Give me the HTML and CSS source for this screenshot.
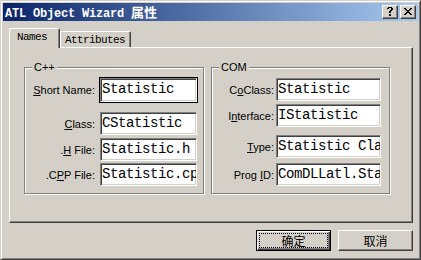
FILE: index.html
```html
<!DOCTYPE html>
<html>
<head>
<meta charset="utf-8">
<link rel="stylesheet" href="styles.css">
</head>
<body>
<div class="window">
  <div class="titlebar">
    <span class="title">ATL Object Wizard <span class="cjk">属性</span></span>
    <div class="caption-btns">
      <div class="cbtn">
        <svg width="14" height="12" viewBox="0 0 14 12" shape-rendering="crispEdges"><path fill="#000" d="M5 1h4v1H5zM4 2h2v1H4zM8 2h2v1H8zM8 3h2v1H8zM7 4h2v1H7zM6 5h2v1H6zM6 6h2v1H6zM6 8h2v2H6z"/></svg>
      </div>
      <div class="cbtn">
        <svg width="14" height="12" viewBox="0 0 14 12" shape-rendering="crispEdges"><path fill="#000" d="M3 2h2v1H3zM9 2h2v1H9zM4 3h2v1H4zM8 3h2v1H8zM5 4h4v1H5zM6 5h2v1H6zM5 6h4v1H5zM4 7h2v1H4zM8 7h2v1H8zM3 8h2v1H3zM9 8h2v1H9z"/></svg>
      </div>
    </div>
  </div>
  <div class="client">
    <div class="tabs">
      <div class="tab active">Names</div>
      <div class="tab">Attributes</div>
    </div>
    <div class="panel">
      <div class="group cpp">
        <span class="legend">C++</span>
        <div class="row r1">
          <span class="label"><u>S</u>hort Name:</span>
          <div class="frame"><div class="edit">Statistic</div></div>
        </div>
        <div class="row r2">
          <span class="label"><u>C</u>lass:</span>
          <div class="edit">CStatistic</div>
        </div>
        <div class="row r3">
          <span class="label">.<u>H</u> File:</span>
          <div class="edit">Statistic.h</div>
        </div>
        <div class="row r4">
          <span class="label">.C<u>P</u>P File:</span>
          <div class="edit">Statistic.cpp</div>
        </div>
      </div>
      <div class="group com">
        <span class="legend">COM</span>
        <div class="row c1">
          <span class="label">C<u>o</u>Class:</span>
          <div class="edit">Statistic</div>
        </div>
        <div class="row c2">
          <span class="label">I<u>n</u>terface:</span>
          <div class="edit">IStatistic</div>
        </div>
        <div class="row c3">
          <span class="label"><u>T</u>ype:</span>
          <div class="edit">Statistic Class</div>
        </div>
        <div class="row c4">
          <span class="label">Prog <u>I</u>D:</span>
          <div class="edit">ComDLLatl.Statistic</div>
        </div>
      </div>
    </div>
    <div class="buttons">
      <button class="btn default"><span class="focus">确定</span></button>
      <button class="btn"><span class="plain">取消</span></button>
    </div>
  </div>
</div>
</body>
</html>
```
FILE: styles.css
```css
* { box-sizing: border-box; }
body {
  margin: 0;
  background: #D4D0C8;
  font-family: "Liberation Sans", Arial, sans-serif;
  font-size: 11px;
  color: #000;
}
.window {
  width: 421px;
  height: 260px;
  border: 1px solid;
  border-color: #D4D0C8 #404040 #404040 #D4D0C8;
  box-shadow: inset 1px 1px #fff, inset -1px -1px #808080;
  padding: 2px;
  display: flex;
  flex-direction: column;
}
.titlebar {
  height: 18px;
  flex: none;
  background: linear-gradient(to right, #0A246A, #A6CAF0);
  display: flex;
  justify-content: space-between;
  align-items: flex-start;
  padding: 0 2px;
}
.title {
  color: #fff;
  font-weight: bold;
  font-family: "Liberation Mono", monospace;
  font-size: 12px;
  letter-spacing: -0.2px;
  line-height: 18px;
  white-space: pre;
}
.cjk {
  font-family: "Noto Sans CJK SC", sans-serif;
  font-size: 13px;
  letter-spacing: 0;
}
.caption-btns {
  display: flex;
  gap: 2px;
  margin-top: 2px;
}
.cbtn {
  width: 16px;
  height: 14px;
  background: #D4D0C8;
  border: 1px solid;
  border-color: #fff #404040 #404040 #fff;
  box-shadow: inset -1px -1px #808080;
}
.cbtn svg { display: block; }
.client {
  flex: 1;
  display: flex;
  flex-direction: column;
  padding: 7px 5px 6px 6px;
}
.tabs {
  display: flex;
  align-items: flex-end;
  height: 19px;
  flex: none;
}
.tab {
  font-family: "Liberation Mono", monospace;
  font-size: 11px;
  letter-spacing: -0.6px;
  background: #D4D0C8;
  border: 1px solid;
  border-bottom: none;
  border-color: #fff #404040 #fff #fff;
  box-shadow: inset -1px 0 #808080;
  border-radius: 2px 2px 0 0;
  width: 71px;
  height: 16px;
  padding: 3px 0 0 4px;
  line-height: 11px;
}
.tab.active {
  position: relative;
  z-index: 1;
  width: 51px;
  height: 20px;
  margin-bottom: -1px;
  padding: 3px 0 0 7px;
}
.panel {
  height: 176px;
  flex: none;
  border: 1px solid;
  border-color: #fff #404040 #404040 #fff;
  box-shadow: inset -1px -1px #808080;
  display: flex;
  align-items: flex-start;
  gap: 7px;
  padding: 19px 0 0 14px;
}
.group {
  position: relative;
  height: 127px;
  border: 1px solid #808080;
  box-shadow: inset 1px 1px #fff, 1px 1px #fff;
  display: flex;
  flex-direction: column;
}
.cpp { width: 180px; padding-top: 9px; }
.com { width: 179px; padding-top: 10px; }
.legend {
  position: absolute;
  top: -7px;
  left: 7px;
  padding: 0 2px;
  line-height: 13px;
  background: #D4D0C8;
}
.row {
  display: flex;
  align-items: center;
}
.label {
  text-align: right;
  white-space: nowrap;
}
.cpp .label { width: 70px; margin-right: 5px; }
.com .label { width: 62px; margin-right: 2px; }
.r2 { margin-top: 9px; }
.r3 { margin-top: 3px; }
.r4 { margin-top: 2px; }
.c2 { margin-top: 3px; }
.c3 { margin-top: 8px; }
.c4 { margin-top: 5px; }
.edit {
  height: 23px;
  background: #fff;
  border: 1px solid;
  border-color: #808080 #fff #fff #808080;
  box-shadow: inset 1px 1px #404040, inset -1px -1px #D4D0C8;
  font-family: "Liberation Mono", monospace;
  font-size: 14px;
  letter-spacing: -0.4px;
  line-height: 20px;
  padding-left: 1px;
  white-space: nowrap;
  overflow: hidden;
}
.cpp .edit { width: 97px; }
.com .edit { width: 105px; }
.frame {
  margin-left: -1px;
  border: 1px solid #000;
  background: #fff;
}
.frame .edit { width: 97px; height: 24px; line-height: 21px; }
.buttons {
  display: flex;
  justify-content: flex-end;
  gap: 7px;
  margin-top: 7px;
}
.btn {
  width: 75px;
  height: 21px;
  margin: 0;
  padding: 0;
  background: #D4D0C8;
  font-family: "Noto Sans CJK SC", sans-serif;
  font-size: 12px;
  color: #000;
  border: 1px solid;
  border-color: #fff #404040 #404040 #fff;
  box-shadow: inset -1px -1px #808080;
  display: flex;
  align-items: stretch;
}
.btn.default {
  border-color: #000;
  box-shadow: inset 1px 1px #fff, inset -1px -1px #404040, inset -2px -2px #808080;
  padding: 2px;
}
.focus, .plain {
  flex: 1;
  display: flex;
  align-items: center;
  justify-content: center;
  line-height: 12px;
}
.focus { border: 1px dotted #000; }
```
